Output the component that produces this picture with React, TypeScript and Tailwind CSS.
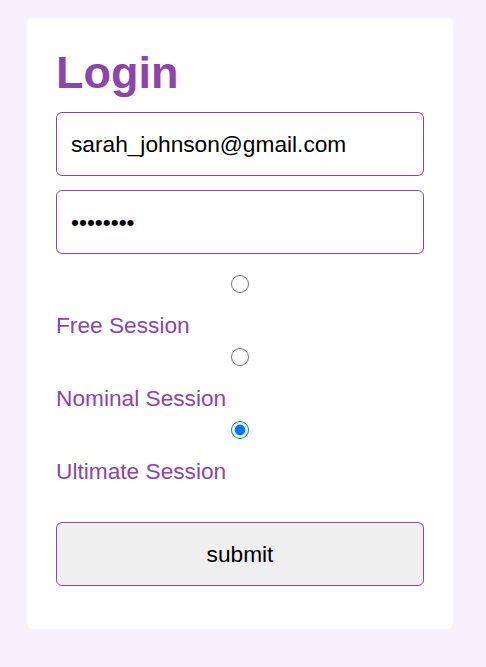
import { useState } from 'react';

const sessions = ['Free Session', 'Nominal Session', 'Ultimate Session'];

const App = () => {
    const [email, setEmail] = useState('sarah_johnson@gmail.com');
    const [password, setPassword] = useState('password');
    const [session, setSession] = useState('Ultimate Session');

    return (
        <div className="min-h-[667px] bg-[#f7f1fd] pt-[18px] pl-[27px] font-['Liberation_Sans',Arial,sans-serif]">
            <div className="w-[426px] rounded-[6px] bg-white px-[29px] pt-[29px] pb-[43px]">
                <h1 className="text-[45px] leading-[52px] font-bold text-[#8e44ad]">Login</h1>

                <form className="mt-[13px] flex flex-col" onSubmit={(e) => e.preventDefault()}>
                    <input
                        className="h-[64px] rounded-[6px] border border-[#8e44ad] px-[14px] text-[22.7px] text-black outline-none"
                        type="email"
                        value={email}
                        onChange={(e) => setEmail(e.target.value)}
                    />
                    <input
                        className="mt-[14px] h-[64px] rounded-[6px] border border-[#8e44ad] px-[14px] text-[22.7px] text-black outline-none"
                        type="password"
                        value={password}
                        onChange={(e) => setPassword(e.target.value)}
                    />

                    {/* sessions */}
                    <div className="mt-[21px] flex flex-col">
                        {sessions.map((s, i) => (
                            <label key={s} className={`flex flex-col ${i > 0 ? 'mt-[10px]' : ''}`}>
                                <input
                                    className="mx-auto h-[18px] w-[18px]"
                                    type="radio"
                                    name="session"
                                    checked={session === s}
                                    onChange={() => setSession(s)}
                                />
                                <span className="mt-[19px] text-[22.7px] leading-[26px] text-[#8e44ad]">{s}</span>
                            </label>
                        ))}
                    </div>

                    <button
                        className="mt-[38px] h-[64px] rounded-[6px] border border-[#8e44ad] bg-[#efefef] text-[22.7px] text-black"
                        type="submit"
                    >
                        submit
                    </button>
                </form>
            </div>
        </div>
    );
};

export default App;
